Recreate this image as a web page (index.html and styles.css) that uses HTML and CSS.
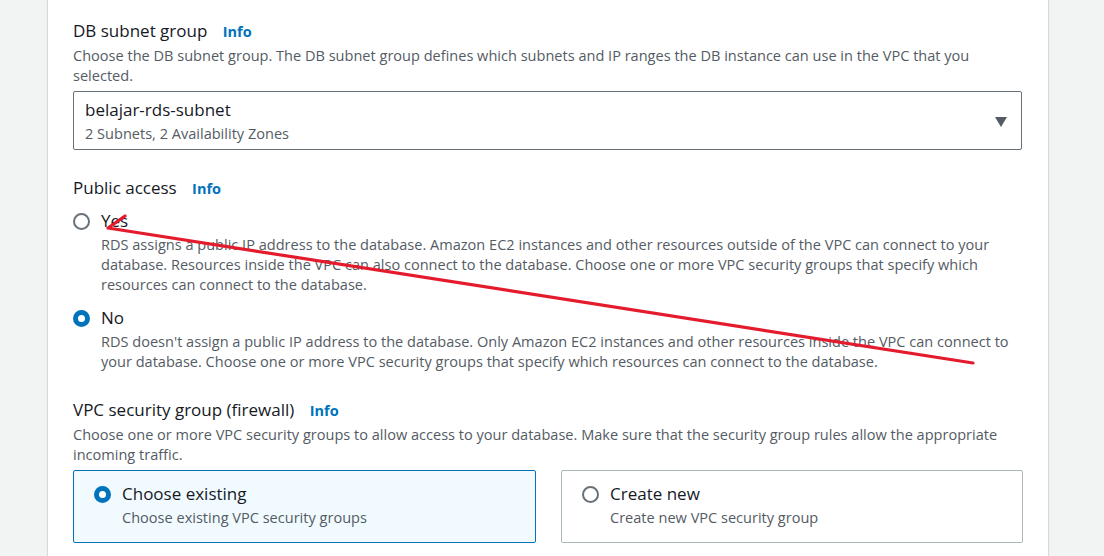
FILE: index.html
```html
<!DOCTYPE html>
<html lang="en">
<head>
<meta charset="utf-8">
<title>Connectivity</title>
<link rel="stylesheet" href="styles.css">
</head>
<body>
<div class="page">
  <main class="panel">
    <section class="field first">
      <div class="label">DB subnet group <a class="info">Info</a></div>
      <p class="desc">Choose the DB subnet group. The DB subnet group defines which subnets and IP ranges the DB instance can use in the VPC that you selected.</p>
      <div class="select">
        <div class="select-text">
          <div class="select-value">belajar-rds-subnet</div>
          <div class="select-sub">2 Subnets, 2 Availability Zones</div>
        </div>
        <span class="caret"></span>
      </div>
    </section>

    <section class="field">
      <div class="label">Public access <a class="info">Info</a></div>
      <div class="radio-group">
        <div class="option">
          <div class="option-row"><span class="radio"></span><span class="option-label">Yes</span></div>
          <p class="option-desc">RDS assigns a public IP address to the database. Amazon EC2 instances and other resources outside of the VPC can connect to your database. Resources inside the VPC can also connect to the database. Choose one or more VPC security groups that specify which resources can connect to the database.</p>
        </div>
        <div class="option">
          <div class="option-row"><span class="radio checked"></span><span class="option-label">No</span></div>
          <p class="option-desc">RDS doesn't assign a public IP address to the database. Only Amazon EC2 instances and other resources inside the VPC can connect to your database. Choose one or more VPC security groups that specify which resources can connect to the database.</p>
        </div>
      </div>
    </section>

    <section class="field vpc">
      <div class="label">VPC security group (firewall) <a class="info">Info</a></div>
      <p class="desc">Choose one or more VPC security groups to allow access to your database. Make sure that the security group rules allow the appropriate incoming traffic.</p>
      <div class="tiles">
        <div class="tile selected">
          <div class="option-row"><span class="radio checked"></span><span class="option-label">Choose existing</span></div>
          <div class="tile-desc">Choose existing VPC security groups</div>
        </div>
        <div class="tile">
          <div class="option-row"><span class="radio"></span><span class="option-label">Create new</span></div>
          <div class="tile-desc">Create new VPC security group</div>
        </div>
      </div>
    </section>
  </main>
</div>

<svg class="annotation" width="1104" height="556" viewBox="0 0 1104 556" aria-hidden="true">
  <polyline points="125,216 108,228 973,363" fill="none" stroke="#e41b2d" stroke-width="3.2" stroke-linecap="round" stroke-linejoin="round"/>
</svg>
</body>
</html>
```

FILE: styles.css
```css
* { box-sizing: border-box; }

html, body {
  margin: 0;
  padding: 0;
  height: 100%;
}

body {
  background: #f2f3f3;
  font-family: "Open Sans", "Noto Sans", Arial, sans-serif;
  color: #16191f;
  overflow: hidden;
  position: relative;
}

.page {
  display: flex;
  height: 556px;
}

.panel {
  margin-left: 47px;
  width: 1002px;
  background: #ffffff;
  border-left: 1px solid #d5dbdb;
  border-right: 1px solid #d5dbdb;
  box-shadow: 0 0 1px rgba(0,0,0,0.08);
  padding: 20px 26px 0 25px;
}

.field + .field {
  margin-top: 27px;
}

.field.vpc {
  margin-top: 28px;
}

.label {
  font-size: 17px;
  line-height: 22px;
  color: #16191f;
}

.info {
  font-size: 14.5px;
  font-weight: 700;
  color: #0073bb;
  margin-left: 11px;
  text-decoration: none;
}

.desc {
  margin: 2px 0 0;
  font-size: 14.55px;
  line-height: 20px;
  color: #545b64;
}

.select {
  margin-top: 6px;
  border: 1px solid #687078;
  border-radius: 2px;
  height: 59px;
  padding: 7px 14px 0 11px;
  display: flex;
  align-items: flex-start;
  justify-content: space-between;
}

.select-value {
  font-size: 17px;
  line-height: 22px;
  color: #16191f;
}

.select-sub {
  margin-top: 2px;
  font-size: 14.55px;
  line-height: 20px;
  color: #545b64;
}

.caret {
  width: 0;
  height: 0;
  margin-top: 18px;
  border-left: 6px solid transparent;
  border-right: 6px solid transparent;
  border-top: 10px solid #545b64;
}

.radio-group {
  margin-top: 10px;
  display: flex;
  flex-direction: column;
  gap: 13px;
}

.option-row {
  display: flex;
  align-items: center;
  height: 22px;
}

.radio {
  width: 17px;
  height: 17px;
  border-radius: 50%;
  border: 2px solid #687078;
  background: #fff;
  margin-right: 11px;
  flex: none;
}

.radio.checked {
  border: 5px solid #0073bb;
}

.option-label {
  font-size: 17px;
  line-height: 22px;
  color: #16191f;
}

.option-desc {
  margin: 2px 0 0 28px;
  font-size: 14.55px;
  line-height: 20px;
  color: #545b64;
}

.tiles {
  margin-top: 6px;
  display: grid;
  grid-template-columns: 463px 462px;
  column-gap: 25px;
}

.tile {
  height: 73px;
  border: 1px solid #aab7b8;
  border-radius: 2px;
  padding: 12px 20px 0;
  background: #fff;
}

.tile.selected {
  border-color: #0073bb;
  background: #f1faff;
}

.tile-desc {
  margin: 2px 0 0 28px;
  font-size: 14.55px;
  line-height: 20px;
  color: #545b64;
}

.annotation {
  position: absolute;
  left: 0;
  top: 0;
  pointer-events: none;
}
```
